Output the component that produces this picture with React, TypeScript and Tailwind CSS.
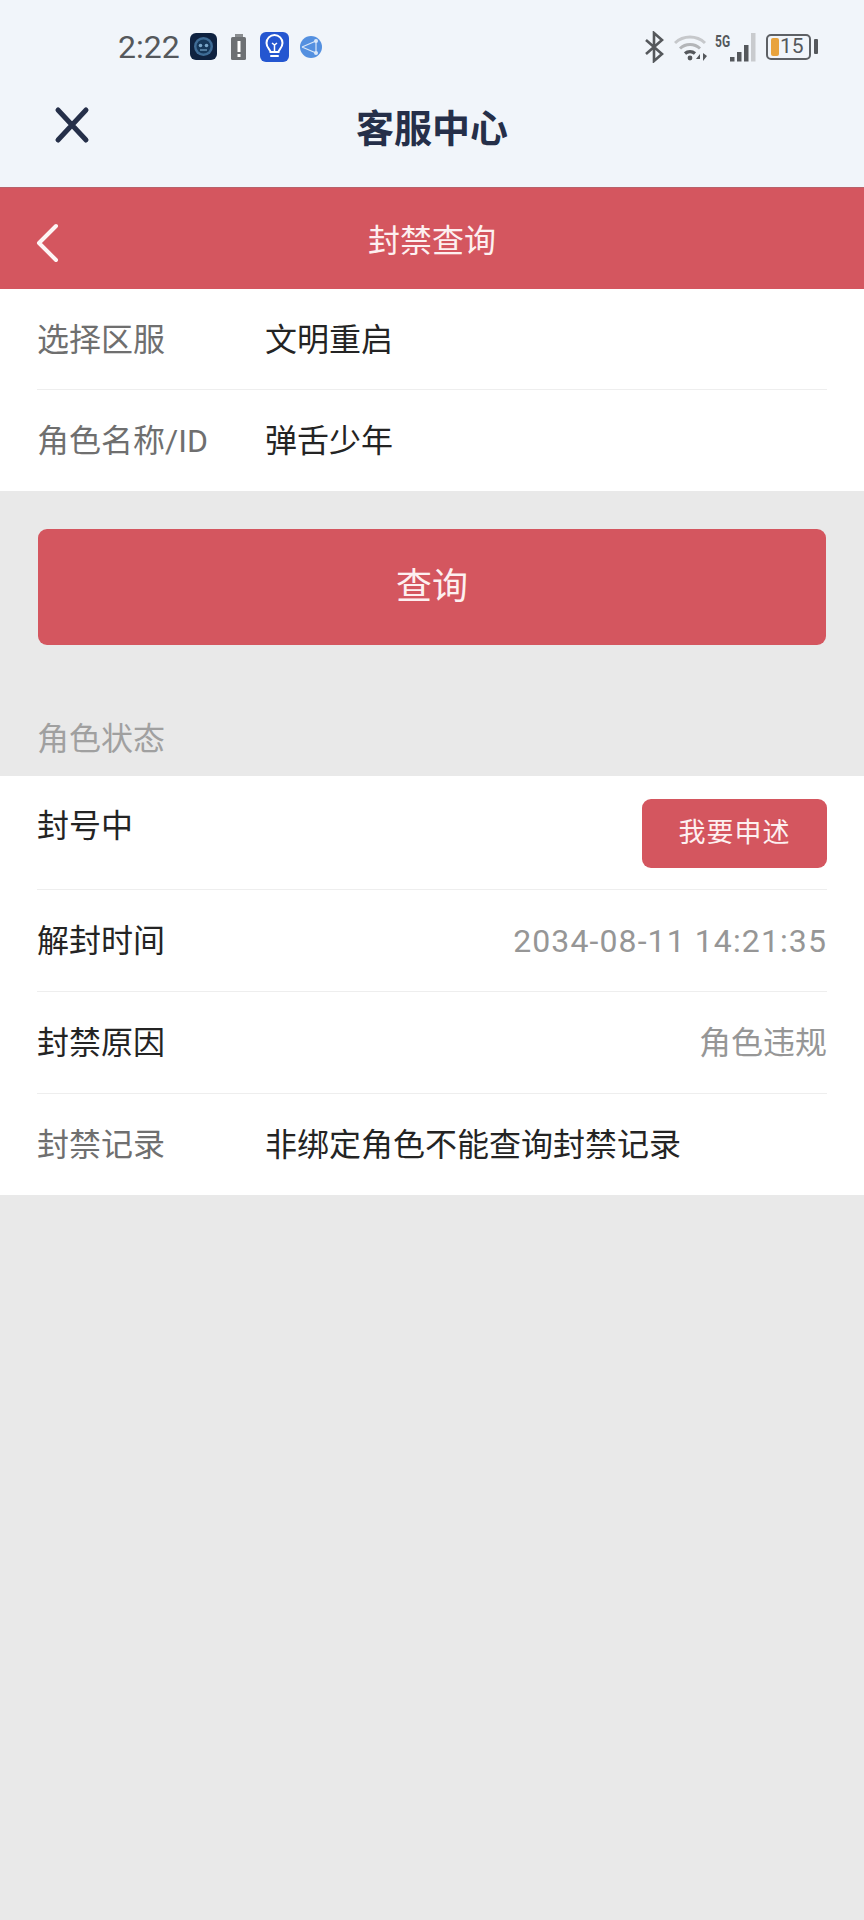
import React from "react";

const FONT = "font-['Roboto','Noto_Sans_CJK_SC',sans-serif]";

const StatusIcons = () => (
  <div className="flex items-center gap-[9px] ml-[10px]">
    {/* robot app */}
    <svg width="27" height="27" viewBox="0 0 27 27">
      <rect width="27" height="27" rx="6" fill="#0f2240" />
      <circle cx="13.5" cy="13.5" r="9.500" fill="#3f6c96" />
      <circle cx="13.5" cy="13.5" r="7" fill="#16375a" />
      <circle cx="10.500" cy="12.500" r="1.800" fill="#7aa6c9" />
      <circle cx="16.500" cy="12.500" r="1.800" fill="#7aa6c9" />
      <path d="M10 17h7" stroke="#7aa6c9" strokeWidth="1.200" />
    </svg>
    {/* battery warning */}
    <svg width="17" height="28" viewBox="0 0 17 28" className="ml-[4px]">
      <rect x="5" y="1" width="8" height="3" fill="#8a8d90" />
      <rect x="1" y="4" width="15" height="23" rx="1.5" fill="#6d7073" />
      <rect x="7.500" y="8" width="3" height="11" fill="#fff" />
      <rect x="7.500" y="21" width="3" height="3" fill="#fff" />
    </svg>
    {/* bulb app */}
    <svg width="29" height="30" viewBox="0 0 29 30" className="ml-[4px]">
      <rect width="29" height="30" rx="6" fill="#2456d0" />
      <path d="M10.500 20c0-2.500-4-4-4-9a8 8 0 0 1 16 0c0 5-4 6.500-4 9z" fill="none" stroke="#fff" strokeWidth="2" />
      <path d="M11 24h7" stroke="#fff" strokeWidth="2" strokeLinecap="round" />
      <path d="M14.500 20v-7M12 11l2.500 2 2.500-2" stroke="#fff" strokeWidth="1.500" fill="none" />
    </svg>
    {/* share globe */}
    <svg width="24" height="24" viewBox="0 0 24 24" className="ml-[1px]">
      <circle cx="12" cy="12" r="11" fill="#5490e0" />
      <circle cx="17" cy="6" r="2" fill="#dbe8f8" />
      <circle cx="17" cy="18" r="2" fill="#dbe8f8" />
      <path d="M3 12l14-6M3 12l14 6M17 6v12" stroke="#dbe8f8" strokeWidth="1.200" fill="none" />
    </svg>
  </div>
);

const SystemIcons = () => (
  <div className="flex items-center">
    {/* bluetooth */}
    <svg width="21" height="32" viewBox="0 0 21 32" fill="none" stroke="#55585c" strokeWidth="2.600">
      <path d="M2 9l16 14-8 7V2l8 7L2 23" />
    </svg>
    {/* wifi */}
    <svg width="36" height="30" viewBox="0 0 36 30" fill="none" className="ml-[9px]">
      <path d="M1 11a22 22 0 0 1 30 0" stroke="#c6c8cb" strokeWidth="3" />
      <path d="M6 16.500a14.500 14.500 0 0 1 20 0" stroke="#b3b5b8" strokeWidth="3" />
      <path d="M11 21.500a7.500 7.500 0 0 1 10 0" stroke="#55585c" strokeWidth="3.200" />
      <circle cx="16" cy="26" r="2.400" fill="#55585c" />
      <path d="M26 22l-4 5h4zM29 21v8l4-5z" fill="#55585c" />
    </svg>
    <span className="w-[15px] text-[16px] leading-none font-bold text-[#55585c] self-start mt-[3px] ml-[5px] font-['Roboto',sans-serif] scale-x-75 origin-left">5G</span>
    {/* signal */}
    <svg width="28" height="32" viewBox="0 0 28 32" className="-ml-[1px]">
      <rect x="1" y="26" width="4.500" height="4.500" fill="#55585c" />
      <rect x="8" y="21" width="4.500" height="9.500" fill="#55585c" />
      <rect x="15" y="14" width="4.500" height="16.500" fill="#55585c" />
      <rect x="22" y="2" width="4.500" height="28.500" fill="#c9cbce" />
    </svg>
    {/* battery */}
    <div className="ml-[9px] flex items-center">
      <div className="w-[45px] h-[26px] border-2 border-[#5e6165] rounded-[5px] flex items-center pl-[3px]">
        <div className="w-[8px] h-[18px] bg-[#e8a33d] rounded-[2px]" />
        <span className="text-[21px] leading-none text-[#55585c] ml-[1px] font-['Roboto',sans-serif]">15</span>
      </div>
      <div className="w-[4px] h-[15px] bg-[#55585c] ml-[3px] rounded-[1px]" />
    </div>
  </div>
);

interface RowProps {
  label: string;
  value: string;
  last?: boolean;
}

// label on the left, dark value in a fixed column
const FormRow = ({ label, value, last }: RowProps) => (
  <div className="px-[37px]">
    <div className={`flex items-center h-[101px] pt-[1px] ${last ? "" : "border-b border-[#eeeeee]"}`}>
      <span className="w-[228px] text-[32px] text-[#6f6f6f] shrink-0">{label}</span>
      <span className="text-[32px] text-[#242424]">{value}</span>
    </div>
  </div>
);

const InfoRow = ({ label, value, wide }: RowProps & { wide?: boolean }) => (
  <div className="px-[37px]">
    <div className="flex items-center justify-between h-[102px] border-b border-[#eeeeee]">
      <span className="text-[32px] text-[#242424]">{label}</span>
      <span className={`text-[32px] text-[#969696] ${wide ? "tracking-[1.1px]" : ""}`}>{value}</span>
    </div>
  </div>
);

export default function App() {
  return (
    <div className={`w-[864px] h-[1920px] bg-[#e9e9e9] overflow-hidden ${FONT}`}>
      <div className="h-[187px] bg-[#f1f5fa] flex flex-col">
        {/* system status bar */}
        <div className="h-[93px] pl-[118px] pr-[46px] flex items-center justify-between">
          <div className="flex items-center">
            <span className="text-[32px] leading-none text-[#55585c]">2:22</span>
            <StatusIcons />
          </div>
          <SystemIcons />
        </div>
        {/* webview title bar */}
        <div className="relative flex-1 flex items-center justify-center pb-[23px]">
          <svg width="36" height="38" viewBox="0 0 36 38" className="absolute left-[54px] top-[13px]" fill="none" stroke="#252f49" strokeWidth="5" strokeLinecap="round">
            <path d="M4 4l28 30M32 4L4 34" />
          </svg>
          <span className="text-[38px] font-bold text-[#252f49] leading-none">客服中心</span>
        </div>
      </div>

      <div className="relative h-[102px] bg-[#d4565f] border-t border-[#b8626b] flex items-center justify-center pt-[5px]">
        <svg width="24" height="40" viewBox="0 0 24 40" className="absolute left-[35px] top-[35px]" fill="none" stroke="#fdf5f5" strokeWidth="4" strokeLinecap="round" strokeLinejoin="round">
          <path d="M21 3L4 20l17 17" />
        </svg>
        <span className="text-[32px] text-[#fdf0f0] leading-none">封禁查询</span>
      </div>

      <div className="bg-white">
        <FormRow label="选择区服" value="文明重启" />
        <FormRow label="角色名称/ID" value="弹舌少年" last />
      </div>

      <div className="px-[38px] pt-[38px]">
        <button className="w-full h-[116px] bg-[#d4565f] rounded-[9px] text-[36px] text-[#fdf0f0]">查询</button>
      </div>

      <div className="h-[131px] px-[37px] pt-[70px] text-[32px] leading-[48px] text-[#a0a0a0]">角色状态</div>

      <div className="bg-white">
        <div className="px-[37px]">
          <div className="flex justify-between h-[114px] border-b border-[#eeeeee]">
            <span className="text-[32px] text-[#242424] leading-[46px] pt-[27px]">封号中</span>
            <button className="w-[185px] h-[69px] mt-[23px] bg-[#d4565f] rounded-[9px] text-[27px] text-[#fdf0f0] tracking-[1px]">我要申述</button>
          </div>
        </div>
        <InfoRow label="解封时间" value="2034-08-11 14:21:35" wide />
        <InfoRow label="封禁原因" value="角色违规" />
        <div className="px-[37px] flex items-center h-[101px]">
          <span className="w-[228px] text-[32px] text-[#6f6f6f] shrink-0">封禁记录</span>
          <span className="text-[32px] text-[#242424]">非绑定角色不能查询封禁记录</span>
        </div>
      </div>
    </div>
  );
}
